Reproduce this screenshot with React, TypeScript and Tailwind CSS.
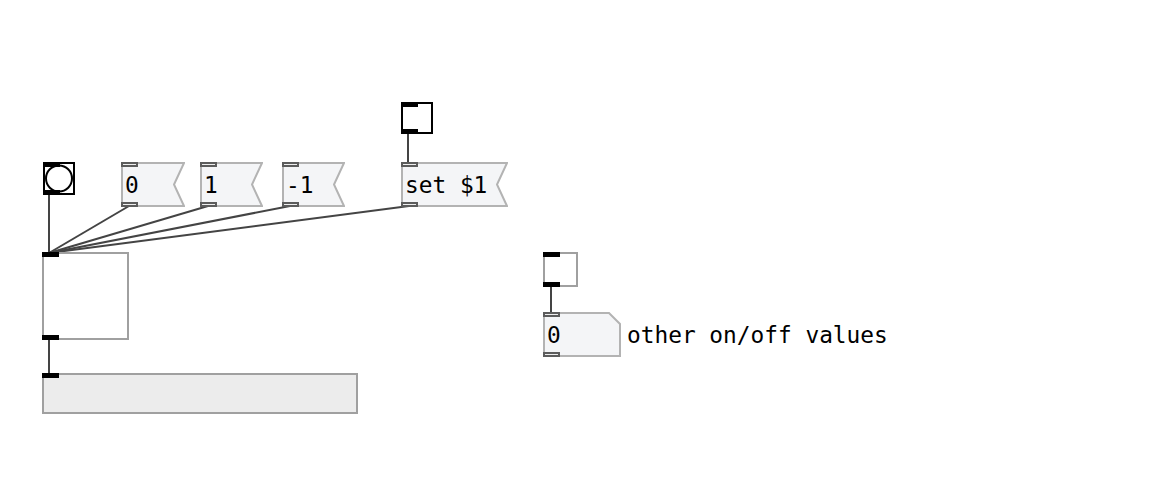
const mono = { fontFamily: '"DejaVu Sans Mono", "Liberation Mono", monospace' }

type Box = { x: number; y: number; w: number; h: number }

function Port({ top, dark }: { top: boolean; dark?: boolean }) {
  if (dark) {
    return (
      <div
        className={`absolute left-0 w-[17px] h-[5px] bg-black ${top ? "top-0" : "bottom-0"}`}
      />
    )
  }
  return (
    <div
      className={`absolute left-0 w-[17px] h-[5px] bg-[#eeeeee] border-2 border-[#5c5c5c] ${top ? "top-0" : "bottom-0"}`}
    />
  )
}

function Message({ x, y, w, h, label }: Box & { label: string }) {
  return (
    <div className="absolute" style={{ left: x, top: y, width: w, height: h }}>
      <svg width={w} height={h} className="absolute inset-0">
        <polygon
          points={`1,1 ${w - 1},1 ${w - 11},${h / 2} ${w - 1},${h - 1} 1,${h - 1}`}
          fill="#f4f5f7"
          stroke="#b3b3b3"
          strokeWidth={2}
        />
      </svg>
      <Port top />
      <Port top={false} />
      <span
        className="absolute left-[4px] top-[12px] text-[22.8px] leading-none text-black whitespace-pre"
        style={mono}
      >
        {label}
      </span>
    </div>
  )
}

function NumberBox({ x, y, w, h, label }: Box & { label: string }) {
  return (
    <div className="absolute" style={{ left: x, top: y, width: w, height: h }}>
      <svg width={w} height={h} className="absolute inset-0">
        <polygon
          points={`1,1 ${w - 12},1 ${w - 1},12 ${w - 1},${h - 1} 1,${h - 1}`}
          fill="#f4f5f7"
          stroke="#b3b3b3"
          strokeWidth={2}
        />
      </svg>
      <Port top />
      <Port top={false} />
      <span
        className="absolute left-[4px] top-[12px] text-[22.8px] leading-none text-black"
        style={mono}
      >
        {label}
      </span>
    </div>
  )
}

function Gui({
  x, y, w, h, border, fill, outlet = true, children
}: Box & { border: string; fill: string; outlet?: boolean; children?: React.ReactNode }) {
  return (
    <div
      className="absolute border-2"
      style={{ left: x, top: y, width: w, height: h, borderColor: border, background: fill }}
    >
      {children}
      <div className="absolute -left-[2px] -top-[2px] w-[17px] h-[5px] bg-black" />
      {outlet && <div className="absolute -left-[2px] -bottom-[2px] w-[17px] h-[5px] bg-black" />}
    </div>
  )
}

export default function App() {
  const cords: [number, number, number, number][] = [
    [49, 195, 49, 253],
    [129, 206, 49, 253],
    [208, 206, 49, 253],
    [290, 206, 49, 253],
    [409, 206, 49, 253],
    [408, 134, 408, 162],
    [49, 340, 49, 373],
    [551, 287, 551, 312]
  ]

  return (
    <div className="relative w-[1163px] h-[478px] bg-white overflow-hidden">
      <svg width={1163} height={478} className="absolute inset-0">
        {cords.map(([x1, y1, x2, y2], i) => (
          <line key={i} x1={x1} y1={y1} x2={x2} y2={y2} stroke="#444" strokeWidth={2} />
        ))}
      </svg>

      {/* bang */}
      <Gui x={43} y={162} w={32} h={33} border="#000" fill="#fff">
        <svg width={28} height={29} className="absolute inset-0">
          <circle cx={14} cy={14.5} r={13} fill="#fff" stroke="#000" strokeWidth={2} />
        </svg>
      </Gui>

      {/* toggle */}
      <Gui x={401} y={102} w={32} h={32} border="#000" fill="#fff" />

      <Message x={121} y={162} w={64} h={45} label="0" />
      <Message x={200} y={162} w={63} h={45} label="1" />
      <Message x={282} y={162} w={63} h={45} label="-1" />
      <Message x={401} y={162} w={107} h={45} label="set $1" />

      {/* big toggle */}
      <Gui x={42} y={252} w={87} h={88} border="#a0a0a0" fill="#fff" />

      {/* hslider */}
      <Gui x={42} y={373} w={316} h={41} border="#a0a0a0" fill="#ececec" outlet={false} />

      {/* small toggle */}
      <Gui x={543} y={252} w={35} h={35} border="#a0a0a0" fill="#fff" />

      <NumberBox x={543} y={312} w={78} h={45} label="0" />

      <span
        className="absolute left-[627px] top-[324px] text-[22.8px] leading-none text-black whitespace-pre"
        style={mono}
      >
        other on/off values
      </span>
    </div>
  )
}
